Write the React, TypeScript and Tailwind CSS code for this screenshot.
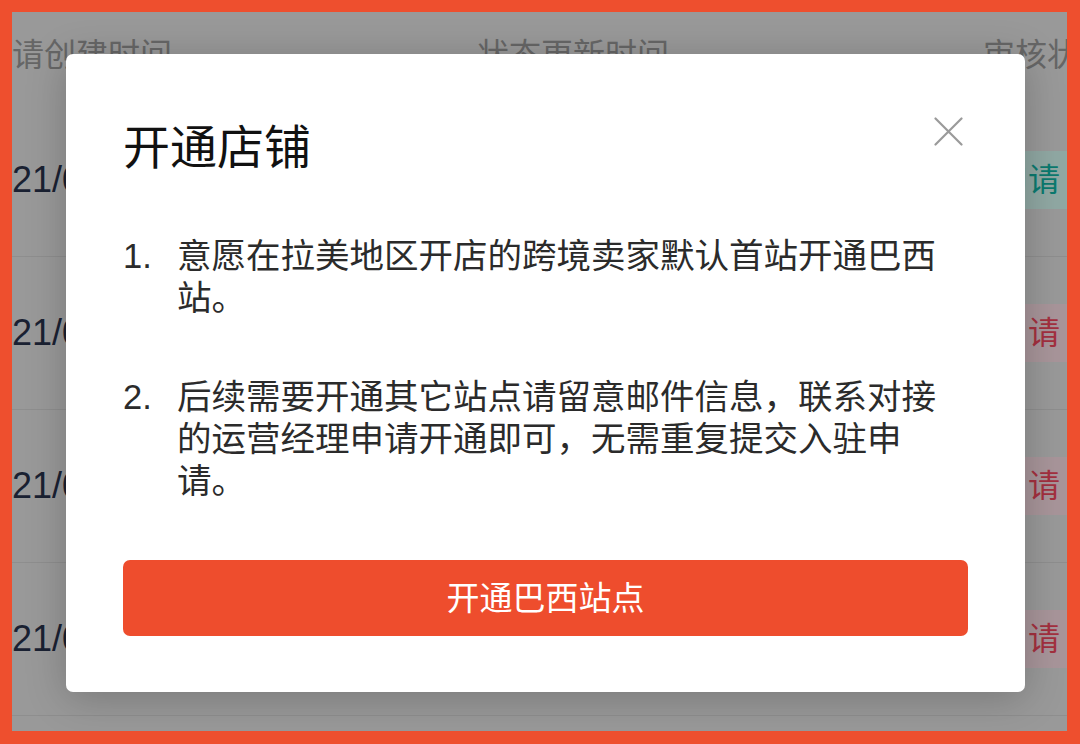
import React from "react";

const font = { fontFamily: '"Liberation Sans", "Noto Sans CJK SC", sans-serif' };

function Badge({ tone }: { tone: "teal" | "red" }) {
  return (
    <span
      className={
        "inline-flex items-center h-[58px] pl-[10px] pr-[8px] text-[32px] whitespace-nowrap " +
        (tone === "teal" ? "bg-[#90a8a3] text-[#0b7a6f]" : "bg-[#a8959a] text-[#a3303f]")
      }
    >
      申请
    </span>
  );
}

function Row({ tone }: { tone: "teal" | "red" }) {
  return (
    <div className="grid grid-cols-[465px_509px_1fr] h-[153px] items-center border-b border-[#8e8e8e] shrink-0">
      <div className="text-[36px] text-[#1a2132] whitespace-nowrap">21/06/15 10:23:45</div>
      <div className="text-[36px] text-[#1a2132] whitespace-nowrap">21/06/16 09:12:30</div>
      <div className="flex">
        <Badge tone={tone} />
      </div>
    </div>
  );
}

export default function App() {
  return (
    <div
      className="w-[1080px] h-[744px] border-[#ee4f2e] border-t-[12px] border-l-[12px] border-r-[13px] border-b-[13px] overflow-hidden"
      style={font}
    >
      <div className="relative w-full h-full bg-[#999999] overflow-hidden">
        {/* table behind */}
        <div className="flex flex-col">
          <div className="grid grid-cols-[465px_506px_1fr] h-[92px] pt-[22px] text-[32px] leading-[42px] text-[#666666] whitespace-nowrap shrink-0">
            <div>请创建时间</div>
            <div>状态更新时间</div>
            <div>审核状态</div>
          </div>
          <Row tone="teal" />
          <Row tone="red" />
          <Row tone="red" />
          <Row tone="red" />
        </div>

        {/* modal */}
        <div className="absolute left-[54px] top-[42px] w-[959px] h-[638px] bg-white rounded-[7px] shadow-[0_6px_40px_rgba(0,0,0,0.22)] pt-[66px] px-[57px] pb-[56px] flex flex-col">
          <button className="absolute right-[62px] top-[63px] w-[29px] h-[29px] text-[#9a9a9a]" aria-label="close">
            <svg viewBox="0 0 29 29" width="29" height="29" fill="none" stroke="currentColor" strokeWidth="2.2" strokeLinecap="round">
              <path d="M1.5 1.5 L27.5 27.5 M27.5 1.5 L1.5 27.5" />
            </svg>
          </button>
          <h2 className="text-[47px] leading-[56px] text-[#111] font-normal">开通店铺</h2>
          <ol className="mt-[59px] text-[34.5px] leading-[42px] text-[#2b2b2b]">
            <li className="flex">
              <span className="w-[54px] shrink-0">1.</span>
              <span className="w-[770px]">意愿在拉美地区开店的跨境卖家默认首站开通巴西站。</span>
            </li>
            <li className="flex mt-[57px]">
              <span className="w-[54px] shrink-0">2.</span>
              <span className="w-[770px]">后续需要开通其它站点请留意邮件信息，联系对接的运营经理申请开通即可，无需重复提交入驻申请。</span>
            </li>
          </ol>
          <button className="mt-[58px] h-[76px] w-full rounded-[7px] bg-[#ee4d2d] text-white text-[33px] leading-none">
            开通巴西站点
          </button>
        </div>
      </div>
    </div>
  );
}
